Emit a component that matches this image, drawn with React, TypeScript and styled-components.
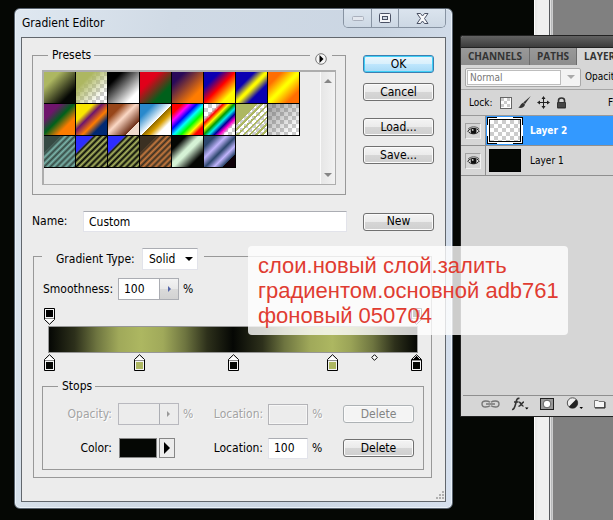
import React from "react";
import styled, { createGlobalStyle, css } from "styled-components";

const OLIVE = "#adb761";
const INK = "#050704";
const CHECKER = "repeating-conic-gradient(#cccccc 0 25%, #ffffff 0 50%) 0 0 / 8px 8px";
const UI_FONT = '"DejaVu Sans Condensed", "Noto Sans", sans-serif';

const GlobalStyle = createGlobalStyle`
  *, *::before, *::after { box-sizing: border-box; }
  body { margin: 0; background: #808080; }
  button, input, select { font: inherit; color: inherit; margin: 0; padding: 0; border-radius: 0; }
`;

/* ---------- desktop ---------- */

const Desktop = styled.div`
  position: relative;
  display: flex;
  min-height: 100vh;
  overflow: hidden;
  font: 12px/15px ${UI_FONT};
  color: #000;
`;

const Canvas = styled.div`
  flex: 1;
  background: ${INK};
`;

const CanvasScroll = styled.div`
  width: 19px;
  background: linear-gradient(90deg, #fff 1px, #e4e4e4 1px, #efefef 4px, #efefef 15px, #55585c 15px, #55585c 16px, #e0e0e0 16px, #e0e0e0 17px, #aeb0b2 17px, #d4d4d4 19px);
`;

const Workspace = styled.div`
  width: 60px;
  background: #808080;
`;

/* ---------- dialog ---------- */

const Dialog = styled.section`
  position: absolute;
  top: 8px;
  left: 14px;
  right: 160px;
  padding: 0 6px 6px;
  border: 1px solid #5a6470;
  border-radius: 6px;
  background: linear-gradient(100deg, #dfe8f1 0, #d0dae5 30%, #cbd6e3 70%, #d6e0ee 100%);
  box-shadow: inset 0 0 0 1px #eaf1f8;
`;

const TitleBar = styled.header`
  display: flex;
  justify-content: space-between;
  height: 28px;
  padding: 0 0 0 1px;
`;

const Title = styled.h1`
  margin: 0;
  padding-top: 6px;
  font: 12px/16px ${UI_FONT};
`;

const Caption = styled.div`
  display: flex;
  height: 19px;
  border: 1px solid #8793a2;
  border-top: 0;
  border-radius: 0 0 5px 5px;
  overflow: hidden;
`;

const CaptionButton = styled.button<{ $wide?: boolean }>`
  display: grid;
  place-items: center;
  width: ${(p) => (p.$wide ? 47 : 27)}px;
  border: 0;
  background: linear-gradient(#dbe4ee, #cdd8e4);
  & + & { border-left: 1px solid #8793a2; }
`;

const Client = styled.div`
  position: relative;
  padding: 10px 11px 23px 10px;
  border: 1px solid #62676d;
  background: #ececec;
`;

const Group = styled.fieldset`
  position: relative;
  min-width: 0;
  margin: 0;
  padding: 0;
  border: 1px solid #989898;
`;

const Legend = styled.legend`
  margin-left: 15px;
  padding: 0 3px 0 4px;
  line-height: 15px;
`;

const TopArea = styled.div`
  display: flex;
  gap: 17px;
`;

const PresetGroup = styled(Group)`
  flex: 1;
  padding: 7px 9px 9px;
  ${Legend} { margin-left: 6px; }
`;

const FlyoutButton = styled.button`
  position: absolute;
  top: -10px;
  right: 13px;
  display: grid;
  width: 22px;
  height: 12px;
  place-items: center;
  border: 0;
  background: #ececec;
`;

const PresetList = styled.div`
  display: flex;
  justify-content: space-between;
  height: 115px;
  border: 2px solid #adadad;
  border-width: 2px 1px 1px 2px;
  background: #ececec;
`;

const SwatchGrid = styled.div`
  display: grid;
  grid-template-columns: repeat(8, 32px);
  grid-auto-rows: 32px;
`;

const Swatch = styled.button<{ $fill: string }>`
  border: 0 solid #000;
  border-width: 0 1px 1px 0;
  background: ${(p) => p.$fill};
  background-origin: padding-box;
`;

const ListScroll = styled.div`
  display: flex;
  flex-direction: column;
  justify-content: space-between;
  width: 15px;
  padding: 6px 0;
  border-left: 1px solid #fafafa;
  background: linear-gradient(90deg, #e6e6e6, #f2f2f2);
`;

const ScrollButton = styled.button`
  display: grid;
  place-items: center;
  height: 6px;
  border: 0;
  background: none;
`;

const ButtonColumn = styled.div`
  display: flex;
  flex-direction: column;
  gap: 10px;
  padding-top: 7px;
`;

const ButtonPair = styled.div`
  display: flex;
  flex-direction: column;
  gap: 10px;
  & + & { margin-top: 7px; }
`;

const PushButton = styled.button<{ $primary?: boolean }>`
  width: 71px;
  height: 18px;
  border: 1px solid #707070;
  border-radius: 3px;
  background: linear-gradient(#f4f4f4, #ebebeb 48%, #d6d6d6 52%, #cfcfcf);
  box-shadow: inset 0 0 0 1px #fbfbfb;
  line-height: 15px;
  text-align: center;
  ${(p) =>
    p.$primary &&
    css`
      border-color: #3c7fb1;
      background: linear-gradient(#eaf6fd, #d9f0fc 48%, #bee6fd 52%, #a7d9f5);
      box-shadow: inset 0 0 0 1px #3fd0f7;
    `}
  &:disabled {
    border-color: #adb2b5;
    background: #f4f4f4;
    color: #838383;
  }
`;

const NameRow = styled.div`
  display: flex;
  align-items: center;
  margin-top: 16px;
`;

const NameLabel = styled.label`
  width: 51px;
`;

const TextInput = styled.input`
  width: 40px;
  height: 21px;
  padding: 0 5px;
  border: 1px solid #e2e3ea;
  border-top-color: #abadb3;
  background: #fff;
  &:disabled {
    border-color: #b4b4b8;
    background: #ececec;
    box-shadow: inset 0 0 0 1px #f6f6f6;
  }
`;

const NameInput = styled(TextInput)`
  flex: 1;
  min-width: 0;
  margin-right: 16px;
`;

const GradientGroup = styled(Group)`
  margin: 10px 2px 0 1px;
  padding: 8px 7px 7px 8px;
`;

const TypeLegend = styled.legend`
  padding: 6px 6px 0 14px;
`;

const TypeField = styled.div`
  display: flex;
  align-items: center;
  gap: 3px;
  height: 22px;
`;

const TypeLabel = styled.label`
  min-width: 83px;
`;

const SelectBox = styled.span`
  display: grid;
  align-items: center;
  width: 56px;
  height: 22px;
  border: 1px solid #e2e3ea;
  border-top-color: #abadb3;
  background: #fff;
  & > * { grid-area: 1 / 1; }
  & > svg { justify-self: end; margin-right: 4px; pointer-events: none; }
`;

const Select = styled.select`
  appearance: none;
  width: 100%;
  height: 20px;
  padding-left: 6px;
  border: 0;
  background: transparent;
`;

const SmoothRow = styled.div`
  display: flex;
  align-items: center;
  gap: 4px;
  padding-left: 1px;
`;

const SmoothLabel = styled.label`
  width: 71px;
  white-space: nowrap;
`;

const Spin = styled.span<{ $off?: boolean }>`
  display: flex;
  width: 61px;
  height: 22px;
  border: 1px solid ${(p) => (p.$off ? "#b8b8be" : "#abadb3")};
  background: ${(p) => (p.$off ? "#ececec" : "#fff")};
`;

const SpinInput = styled.input`
  flex: 1;
  min-width: 0;
  padding-left: 5px;
  border: 0;
  background: transparent;
`;

const SpinButton = styled.button`
  display: grid;
  place-items: center;
  width: 19px;
  border: 0;
  border-left: 1px solid #abadb3;
  background: linear-gradient(#f3f3f3, #e9e9e9 48%, #dadada 52%, #d2d2d2);
  &:disabled { background: #ececec; }
`;

/* ---------- gradient ramp ---------- */

const Ramp = styled.div`
  margin: 8px 0;
  padding: 0 6px;
`;

const StopRail = styled.div`
  position: relative;
  height: 18px;
  margin: 0 2px 0 1px;
`;

const RampBar = styled.div`
  height: 27px;
  border: 1px solid #979797;
  background: linear-gradient(90deg,
    ${INK} 0, #2d301b 7%, #6e7540 13%, #a0a95a 19%, ${OLIVE} 25%, #a0a95a 31%, #6e7540 37%, #2d301b 43%,
    ${INK} 50%, #2d301b 58%, #6e7540 64%, #a0a95a 71%, ${OLIVE} 77%, #9aa357 82%, #6e7540 88%, #2d301b 94%, ${INK} 100%);
`;

const StopButton = styled.button<{ $at: number; $below?: boolean }>`
  position: absolute;
  left: ${(p) => p.$at}%;
  ${(p) => (p.$below ? "bottom: 0;" : "top: 0;")}
  display: block;
  width: 11px;
  height: 17px;
  margin-left: -5px;
  border: 0;
  background: none;
  & > svg { display: block; ${(p) => (p.$below ? "" : "transform: scaleY(-1);")} }
`;

const Midpoint = styled.button`
  position: absolute;
  top: 1px;
  left: 88%;
  width: 7px;
  height: 7px;
  margin-left: -1px;
  border: 0;
  background: none;
  & > svg { display: block; }
`;

/* ---------- stops ---------- */

const StopRow = styled.div`
  display: flex;
  align-items: center;
  height: 22px;
  padding-right: 9px;
`;

const StopsBody = styled.div`
  display: flex;
  flex-direction: column;
  gap: 12px;
  padding: 9px 0 10px;
`;

const StopLabel = styled.label<{ $off?: boolean }>`
  width: 69px;
  margin-right: 6px;
  text-align: right;
  color: ${(p) => (p.$off ? "#a3a3a3" : "#000")};
  text-shadow: ${(p) => (p.$off ? "1px 1px 0 #fff" : "none")};
`;

const LocationLabel = styled(StopLabel)`
  flex: 1;
  width: auto;
  margin-right: 5px;
`;

const Unit = styled.span<{ $off?: boolean }>`
  width: 31px;
  margin-left: 4px;
  color: ${(p) => (p.$off ? "#a3a3a3" : "#000")};
  text-shadow: ${(p) => (p.$off ? "1px 1px 0 #fff" : "none")};
`;

const ColorField = styled.span`
  display: flex;
  gap: 2px;
  width: 61px;
  padding-left: 1px;
`;

const ColorWell = styled.button`
  width: 38px;
  height: 20px;
  border: 1px solid #868686;
  background: ${INK};
`;

const ColorMenu = styled.button`
  display: grid;
  place-items: center;
  width: 16px;
  height: 20px;
  border: 1px solid #868686;
  background: #ececec;
`;

const Grip = styled.svg`
  position: absolute;
  right: 1px;
  bottom: 1px;
`;

/* ---------- layers palette ---------- */

const Palette = styled.aside`
  position: absolute;
  top: 35px;
  right: 0;
  width: 153px;
  overflow: hidden;
  border: 1px solid #222;
  border-right: 0;
  border-radius: 3px 0 0 0;
  background: #d6d6d6;
  font: 10px/14px "DejaVu Sans Condensed", sans-serif;
`;

const PaletteTop = styled.div`
  height: 12px;
  border-bottom: 1px solid #222;
  background: linear-gradient(#626262, #3c3c3c);
`;

const Tabs = styled.nav`
  display: flex;
  height: 17px;
  background: linear-gradient(#999, #8c8c8c);
`;

const Tab = styled.button<{ $active?: boolean }>`
  flex: none;
  padding: 0 7px;
  border: 0;
  border-right: 1px solid #6c6c6c;
  background: ${(p) => (p.$active ? "#d6d6d6" : "transparent")};
  color: #333;
  font: bold 10px/17px "Open Sans", sans-serif;
`;

const BlendRow = styled.div`
  display: flex;
  align-items: center;
  gap: 4px;
  height: 25px;
  padding-left: 4px;
  border-bottom: 1px solid #a6a6a6;
  white-space: nowrap;
`;

const BlendBox = styled.span`
  display: grid;
  grid-template-columns: 1fr 19px;
  align-items: center;
  flex: none;
  width: 116px;
  height: 19px;
  border: 1px solid #a8a8a8;
  border-radius: 2px;
  background: #f3f3f3;
  & > svg { grid-area: 1 / 2; justify-self: center; pointer-events: none; }
`;

const BlendSelect = styled.select`
  appearance: none;
  grid-area: 1 / 1;
  height: 15px;
  margin-left: 1px;
  padding-left: 2px;
  border: 1px solid #bdbdbd;
  background: #fff;
  color: #777;
  line-height: 13px;
`;

const LockRow = styled.div`
  display: flex;
  align-items: center;
  height: 26px;
  padding: 0 0 0 8px;
  border-bottom: 1px solid #999;
`;

const LockIcons = styled.span`
  display: flex;
  flex: 1;
  gap: 6px;
  padding-left: 7px;
`;

const IconButton = styled.button`
  display: grid;
  place-items: center;
  flex: none;
  border: 0;
  background: none;
`;

const FillLabel = styled.span`
  width: 5px;
  overflow: hidden;
`;

const Layer = styled.div<{ $selected?: boolean }>`
  display: grid;
  grid-template-columns: 25px 1fr;
  height: 30px;
  border-bottom: 1px solid #8f8f8f;
  & > :last-child {
    ${(p) =>
      p.$selected &&
      css`
        background: #3399ff;
        color: #fff;
        font-weight: bold;
      `}
  }
`;

const EyeCell = styled.div`
  display: grid;
  place-items: center;
  border-right: 1px solid #8f8f8f;
`;

const EyeButton = styled.button`
  display: grid;
  place-items: center;
  width: 16px;
  height: 16px;
  border: 1px solid #a2a2a2;
  border-right-color: #f0f0f0;
  border-bottom-color: #f0f0f0;
  background: #d6d6d6;
`;

const LayerBody = styled.div`
  display: flex;
  align-items: center;
  gap: 7px;
  padding-left: 1px;
  white-space: nowrap;
`;

const Thumb = styled.span<{ $fill: string; $selected?: boolean }>`
  width: 36px;
  height: 27px;
  padding: 2px;
  ${(p) =>
    p.$selected &&
    css`
      background:
        linear-gradient(#fff, #fff) center / calc(100% - 2px) calc(100% - 2px) no-repeat,
        linear-gradient(#fff, #fff) center / 16px 100% no-repeat,
        linear-gradient(#fff, #fff) center / 100% 11px no-repeat,
        #000;
    `}
  &::before {
    content: "";
    display: block;
    height: 100%;
    border: 1px solid #000;
    background: ${(p) => p.$fill};
  }
`;

const PaletteEmpty = styled.div`
  height: 220px;
  margin-left: 2px;
  border-bottom: 1px solid #8f8f8f;
`;

const PaletteFooter = styled.div`
  display: flex;
  align-items: center;
  gap: 11px;
  height: 20px;
  padding: 0 0 5px 20px;
`;

/* ---------- note ---------- */

const Note = styled.p`
  position: absolute;
  top: 246px;
  left: 248px;
  right: 45px;
  margin: 0;
  padding: 7px 0 7px 10px;
  border-radius: 4px;
  background: rgba(255, 255, 255, 0.8);
  color: #e03c31;
  font: 22px/25px "Liberation Sans", Arial, sans-serif;
  white-space: nowrap;
`;

/* ---------- drawings ---------- */

const Arrow = ({ dir, color = "#000", size = 4 }: { dir: "right" | "down" | "up"; color?: string; size?: number }) => {
  const d = {
    right: `M0 0L${size} ${size}L0 ${size * 2}Z`,
    down: `M0 0H${size * 2}L${size} ${size}Z`,
    up: `M0 ${size}H${size * 2}L${size} 0Z`,
  }[dir];
  const [w, h] = dir === "right" ? [size, size * 2] : [size * 2, size];
  return (
    <svg width={w} height={h} aria-hidden="true">
      <path d={d} fill={color} />
    </svg>
  );
};

const StopMark = ({ color, active }: { color: string; active?: boolean }) => (
  <svg width="11" height="17" aria-hidden="true">
    <path d="M.5 5.500L5.500 .7L10.500 5.500V16.500H.5Z" fill="#f4f4f4" stroke="#000" />
    <path d="M1 5h2V4h1V3h1V2h1v1h1v1h1v1h2v1H1Z" fill={active ? "#000" : "#fff"} />
    <rect x="1" y="6" width="9" height="1" fill="#8a8a8a" />
    <rect x="2" y="8" width="7" height="7" fill={color} />
  </svg>
);

const Eye = () => (
  <svg width="13" height="10" viewBox="0 0 13 10" aria-hidden="true">
    <path d="M.8 5.200C3 1.800 9.500 1.300 12.300 5C9.800 8.600 3.500 8.800 .8 5.200Z" fill="#ddd" stroke="#222" />
    <path d="M1 3.200C3.500 .2 9.500 0 12.200 3" fill="none" stroke="#555" />
    <circle cx="6.600" cy="4.900" r="2.900" fill="#111" />
    <circle cx="5.700" cy="3.900" r=".9" fill="#ddd" />
  </svg>
);

/* ---------- data ---------- */

const lg = (stops: string) => `linear-gradient(135deg, ${stops})`;
const stripes = (a: string, b: string) => `repeating-linear-gradient(135deg, ${a} 0, ${b} 5%, ${a} 10%)`;
const cornered = (corner: string, a: string, b: string) =>
  `linear-gradient(135deg, ${corner} 26%, transparent 30%), ${stripes(a, b)}`;

const PRESETS: [string, string][] = [
  ["Foreground to Background", lg(`${OLIVE} 25%, ${INK} 78%`)],
  ["Foreground to Transparent", `${lg(`${OLIVE} 28%, rgba(173,183,97,0) 80%`)}, ${CHECKER}`],
  ["Black, White", lg("#000 22%, #fff 80%")],
  ["Red, Green", lg("#e1001a 30%, #00601b 72%")],
  ["Violet, Orange", lg("#290a59 20%, #ff7c00 75%")],
  ["Blue, Red, Yellow", lg("#0a00b2 25%, #ff0000 50%, #fffc00 78%")],
  ["Blue, Yellow, Blue", lg("#0a00b2 30%, #fdfa00 48%, #fdfa00 52%, #0a00b2 70%")],
  ["Orange, Yellow, Orange", lg("#ff6e02 22%, #ffff00 48%, #ffff00 52%, #ff6e02 80%")],
  ["Violet, Green, Orange", lg("#6f156c 25%, #00601b 48%, #fd7c00 72%")],
  ["Yellow, Violet, Orange, Blue", lg("#f9e600 28%, #6f156c 42%, #fd7c00 60%, #002874 76%")],
  ["Copper", lg("#97461a 24%, #fbd8c5 46%, #6c2e16 78%, #efdbcd 79%")],
  ["Chrome", lg("#2989cc 22%, #fff 52%, #906a00 53%, #d99f00 64%, #fff 78%")],
  ["Spectrum", lg("#f00 16%, #f0f 28%, #00f 40%, #0ff 52%, #0f0 64%, #ff0 76%, #f00 86%")],
  [
    "Transparent Rainbow",
    `${lg("transparent 24%, #f00 31%, #ff0 40%, #090 49%, #0ee 57%, #009 66%, #f0c 74%, transparent 82%")}, ${CHECKER}`,
  ],
  [
    "Transparent Stripes",
    `linear-gradient(135deg, ${OLIVE} 34%, transparent 34%), repeating-linear-gradient(135deg, ${OLIVE} 0 4%, transparent 4% 10%), ${CHECKER}`,
  ],
  ["Neutral Density", `${lg("rgba(90,90,90,.6), rgba(90,90,90,0) 85%")}, ${CHECKER}`],
  ["Teal Stripes", cornered("#364a44", "#364a44", "#7bb5ab")],
  ["Blue Olive Stripes", cornered("#2d2dff", INK, OLIVE)],
  ["Blue Olive Stripes 2", cornered("#2d2dff", INK, OLIVE)],
  ["Brown Stripes", cornered("#3b3022", "#3b3022", "#c87a3e")],
  ["Mint Sheen", lg(`${INK} 22%, #d5f2d5 44%, #d5f2d5 52%, ${INK} 78%`)],
  ["Lilac Sheen", lg("#2d476e 18%, #c0b4fc 36%, #2d476e 52%, #c0b4fc 66%, #2d476e 79%, #0d0008 80%")],
];

const COLOR_STOPS: [number, string][] = [
  [0, INK],
  [24.5, OLIVE],
  [50, INK],
  [77, OLIVE],
  [100, INK],
];

/* ---------- views ---------- */

function GradientEditor() {
  return (
    <Dialog aria-label="Gradient Editor">
      <TitleBar>
        <Title>Gradient Editor</Title>
        <Caption>
          <CaptionButton aria-label="Minimize">
            <svg width="12" height="5" aria-hidden="true">
              <rect x=".5" y=".5" width="11" height="4" rx="1" fill="#e3e7ee" stroke="#aab0bd" />
            </svg>
          </CaptionButton>
          <CaptionButton aria-label="Maximize">
            <svg width="12" height="10" aria-hidden="true">
              <rect x=".5" y=".5" width="11" height="9" rx="1" fill="#f4f6f9" stroke="#4a5164" />
              <rect x="3.500" y="3.500" width="5" height="3" fill="#cfd8e3" stroke="#4a5164" />
            </svg>
          </CaptionButton>
          <CaptionButton $wide aria-label="Close">
            <svg width="13" height="11" viewBox="0 0 13 11" aria-hidden="true">
              <path d="M1 .5H4.500L6.500 3L8.500 .5H12L8.500 5.500L12 10.500H8.500L6.500 8L4.500 10.500H1L4.500 5.500Z" fill="#f8f9fb" stroke="#4a5164" />
            </svg>
          </CaptionButton>
        </Caption>
      </TitleBar>
      <Client>
        <TopArea>
          <PresetGroup>
            <Legend>Presets</Legend>
            <FlyoutButton aria-label="Preset menu">
              <svg width="12" height="12" aria-hidden="true">
                <circle cx="6" cy="6" r="5.300" fill="#f6f6f6" stroke="#777" />
                <path d="M4.500 2L8.500 6L4.500 10Z" fill="#000" />
              </svg>
            </FlyoutButton>
            <PresetList>
              <SwatchGrid>
                {PRESETS.map(([name, fill]) => (
                  <Swatch key={name} $fill={fill} aria-label={name} />
                ))}
              </SwatchGrid>
              <ListScroll>
                <ScrollButton aria-label="Scroll up"><Arrow dir="up" color="#858585" /></ScrollButton>
                <ScrollButton aria-label="Scroll down"><Arrow dir="down" color="#858585" /></ScrollButton>
              </ListScroll>
            </PresetList>
          </PresetGroup>
          <ButtonColumn>
            <ButtonPair>
              <PushButton $primary>OK</PushButton>
              <PushButton>Cancel</PushButton>
            </ButtonPair>
            <ButtonPair>
              <PushButton>Load...</PushButton>
              <PushButton>Save...</PushButton>
            </ButtonPair>
          </ButtonColumn>
        </TopArea>

        <NameRow>
          <NameLabel htmlFor="name">Name:</NameLabel>
          <NameInput id="name" defaultValue="Custom" />
          <PushButton>New</PushButton>
        </NameRow>

        <GradientGroup>
          <TypeLegend>
            <TypeField>
              <TypeLabel htmlFor="type">Gradient Type:</TypeLabel>
              <SelectBox>
                <Select id="type" defaultValue="Solid">
                  <option>Solid</option>
                  <option>Noise</option>
                </Select>
                <Arrow dir="down" />
              </SelectBox>
            </TypeField>
          </TypeLegend>
          <SmoothRow>
            <SmoothLabel htmlFor="smooth">Smoothness:</SmoothLabel>
            <Spin>
              <SpinInput id="smooth" defaultValue="100" />
              <SpinButton aria-label="Smoothness slider"><Arrow dir="right" color="#5566a8" size={3} /></SpinButton>
            </Spin>
            <span>%</span>
          </SmoothRow>

          <Ramp>
            <StopRail>
              <StopButton $at={0} aria-label="Opacity stop 1"><StopMark color="#000" /></StopButton>
              <StopButton $at={100} aria-label="Opacity stop 2"><StopMark color="#000" /></StopButton>
            </StopRail>
            <RampBar />
            <StopRail>
              {COLOR_STOPS.map(([at, color]) => (
                <StopButton key={at} $at={at} $below aria-label={`Color stop at ${at}%`}>
                  <StopMark color={color} active={at === 100} />
                </StopButton>
              ))}
              <Midpoint aria-label="Midpoint">
                <svg width="7" height="7" aria-hidden="true">
                  <path d="M3.500 .7L6.300 3.500L3.500 6.300L.7 3.500Z" fill="#fff" stroke="#000" />
                </svg>
              </Midpoint>
            </StopRail>
          </Ramp>

          <Group>
            <Legend>Stops</Legend>
            <StopsBody>
              <StopRow>
                <StopLabel $off htmlFor="opacity">Opacity:</StopLabel>
                <Spin $off>
                  <SpinInput id="opacity" disabled />
                  <SpinButton disabled aria-label="Opacity slider"><Arrow dir="right" color="#999" size={3} /></SpinButton>
                </Spin>
                <Unit $off>%</Unit>
                <LocationLabel $off htmlFor="loc1">Location:</LocationLabel>
                <TextInput id="loc1" disabled />
                <Unit $off>%</Unit>
                <PushButton disabled>Delete</PushButton>
              </StopRow>
              <StopRow>
                <StopLabel htmlFor="color">Color:</StopLabel>
                <ColorField>
                  <ColorWell id="color" />
                  <ColorMenu aria-label="Color menu"><Arrow dir="right" size={6} /></ColorMenu>
                </ColorField>
                <LocationLabel htmlFor="loc2">Location:</LocationLabel>
                <TextInput id="loc2" defaultValue="100" />
                <Unit>%</Unit>
                <PushButton>Delete</PushButton>
              </StopRow>
            </StopsBody>
          </Group>
        </GradientGroup>
        <Grip width="9" height="9" aria-hidden="true">
          <path d="M7 1h2M4 4h2M7 4h2M1 7h2M4 7h2M7 7h2" stroke="#b0b0b0" strokeWidth="2" />
        </Grip>
      </Client>
    </Dialog>
  );
}

function LayersPalette() {
  return (
    <Palette aria-label="Layers">
      <PaletteTop />
      <Tabs>
        <Tab>CHANNELS</Tab>
        <Tab>PATHS</Tab>
        <Tab $active>LAYERS</Tab>
      </Tabs>
      <BlendRow>
        <BlendBox>
          <BlendSelect aria-label="Blend mode" defaultValue="Normal">
            <option>Normal</option>
          </BlendSelect>
          <Arrow dir="down" color="#aaa" />
        </BlendBox>
        <span>Opacity:</span>
      </BlendRow>
      <LockRow>
        <span>Lock:</span>
        <LockIcons>
          <IconButton aria-label="Lock transparent pixels">
            <svg width="12" height="12" aria-hidden="true">
              <rect x=".5" y=".5" width="11" height="11" fill="#fff" stroke="#666" />
              <path d="M1 1h3v3H1zM7 1h3v3H7zM4 4h3v3H4zM7 7h3v3H7zM1 7h3v3H1z" fill="#ccc" />
            </svg>
          </IconButton>
          <IconButton aria-label="Lock image pixels">
            <svg width="13" height="13" viewBox="0 0 13 13" aria-hidden="true">
              <path d="M12.800 0L7 8L5.300 6.600Z" fill="#333" />
              <path d="M5 6.800L7 8.500C6.500 11.500 3 12.500 .3 11.500C2.500 10.800 2.600 7.500 5 6.800Z" fill="#333" />
            </svg>
          </IconButton>
          <IconButton aria-label="Lock position">
            <svg width="13" height="13" viewBox="0 0 13 13" aria-hidden="true">
              <path d="M6.500 1.500V11.500M1.500 6.500H11.500" stroke="#222" />
              <path d="M6.500 0L8.500 3H4.500ZM6.500 13L8.500 10H4.500ZM0 6.500L3 4.500V8.500ZM13 6.500L10 4.500V8.500Z" fill="#222" />
            </svg>
          </IconButton>
          <IconButton aria-label="Lock all">
            <svg width="11" height="12" viewBox="0 0 11 12" aria-hidden="true">
              <path d="M2.500 6V3.500Q2.500 1 5.500 1T8.500 3.500V6" fill="none" stroke="#333" strokeWidth="1.600" />
              <rect x="1" y="5" width="9" height="6.500" rx="1" fill="#333" />
              <path d="M2 7h7M2 9h7" stroke="#777" strokeWidth=".6" />
            </svg>
          </IconButton>
        </LockIcons>
        <FillLabel>Fill:</FillLabel>
      </LockRow>
      <Layer $selected>
        <EyeCell><EyeButton aria-label="Toggle Layer 2"><Eye /></EyeButton></EyeCell>
        <LayerBody><Thumb $fill={CHECKER} $selected /><span>Layer 2</span></LayerBody>
      </Layer>
      <Layer>
        <EyeCell><EyeButton aria-label="Toggle Layer 1"><Eye /></EyeButton></EyeCell>
        <LayerBody><Thumb $fill={INK} /><span>Layer 1</span></LayerBody>
      </Layer>
      <PaletteEmpty />
      <PaletteFooter>
        <IconButton aria-label="Link layers">
          <svg width="19" height="8" viewBox="0 0 19 8" aria-hidden="true">
            <path d="M9 2.300Q7.500 1 4.500 1Q1 1 1 4T4.500 7Q7.500 7 9 5.700M10 2.300Q11.500 1 14.500 1Q18 1 18 4T14.500 7Q11.500 7 10 5.700M5 4H14" fill="none" stroke="#777" strokeWidth="1.400" />
          </svg>
        </IconButton>
        <IconButton aria-label="Layer style">
          <svg width="18" height="14" viewBox="0 0 18 14" aria-hidden="true">
            <path d="M1 12.500C3.500 13 4 9 5 5.500C5.600 2.500 6.500 .8 8.500 1.500M3 5H7.500M8 5.500C10 4.500 10 9.500 12.500 9M13 5C11 5 9.500 9.500 7.500 9.300" fill="none" stroke="#333" strokeWidth="1.600" />
            <path d="M14 10.500h3.500L15.800 12.500Z" fill="#000" />
          </svg>
        </IconButton>
        <IconButton aria-label="Add mask">
          <svg width="14" height="12" aria-hidden="true">
            <rect x=".5" y=".5" width="13" height="11" fill="#9a9a9a" stroke="#222" />
            <circle cx="7" cy="6" r="3.800" fill="#fff" stroke="#444" strokeWidth=".8" />
          </svg>
        </IconButton>
        <IconButton aria-label="Adjustment layer">
          <svg width="18" height="13" aria-hidden="true">
            <circle cx="7.500" cy="6" r="5.200" fill="#eee" stroke="#555" />
            <path d="M11.200 2.300A5.200 5.200 0 0 1 3.800 9.700Z" fill="#222" />
            <path d="M14.500 10h3.500L16.300 12Z" fill="#000" />
          </svg>
        </IconButton>
        <IconButton aria-label="New group">
          <svg width="12" height="10" aria-hidden="true">
            <path d="M.5 1.500H4L5 2.500H10.500V8.500H.5Z" fill="#f6f6f6" stroke="#777" />
            <path d="M1 9H11V3" fill="none" stroke="#222" />
          </svg>
        </IconButton>
      </PaletteFooter>
    </Palette>
  );
}

export default function App() {
  return (
    <Desktop>
      <GlobalStyle />
      <Canvas />
      <CanvasScroll />
      <Workspace />
      <GradientEditor />
      <LayersPalette />
      <Note>
        слои.новый слой.залить
        <br />
        градиентом.основной adb761
        <br />
        фоновый 050704
      </Note>
    </Desktop>
  );
}
